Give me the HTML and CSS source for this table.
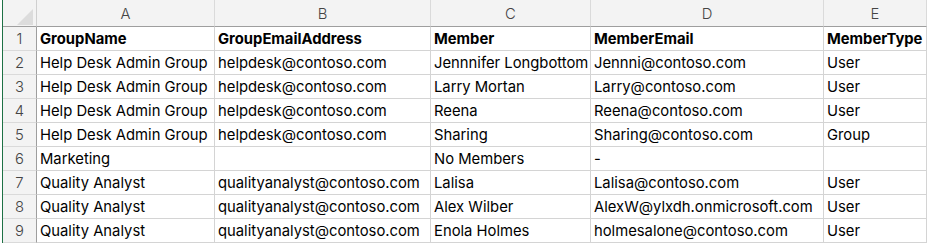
FILE: index.html
```html
<!DOCTYPE html>
<html>
<head>
<meta charset="utf-8">
<link rel="stylesheet" href="styles.css">
</head>
<body>
<div class="sheet">
  <div class="grid">
    <div class="corner"><span class="tri"></span></div>
    <div class="colhead">A</div>
    <div class="colhead">B</div>
    <div class="colhead">C</div>
    <div class="colhead">D</div>
    <div class="colhead">E</div>

    <div class="rowhead">1</div>
    <div class="cell b">GroupName</div>
    <div class="cell b">GroupEmailAddress</div>
    <div class="cell b">Member</div>
    <div class="cell b">MemberEmail</div>
    <div class="cell b">MemberType</div>

    <div class="rowhead">2</div>
    <div class="cell">Help Desk Admin Group</div>
    <div class="cell">helpdesk@contoso.com</div>
    <div class="cell">Jennnifer Longbottom</div>
    <div class="cell">Jennni@contoso.com</div>
    <div class="cell">User</div>

    <div class="rowhead">3</div>
    <div class="cell">Help Desk Admin Group</div>
    <div class="cell">helpdesk@contoso.com</div>
    <div class="cell">Larry Mortan</div>
    <div class="cell">Larry@contoso.com</div>
    <div class="cell">User</div>

    <div class="rowhead">4</div>
    <div class="cell">Help Desk Admin Group</div>
    <div class="cell">helpdesk@contoso.com</div>
    <div class="cell">Reena</div>
    <div class="cell">Reena@contoso.com</div>
    <div class="cell">User</div>

    <div class="rowhead">5</div>
    <div class="cell">Help Desk Admin Group</div>
    <div class="cell">helpdesk@contoso.com</div>
    <div class="cell">Sharing</div>
    <div class="cell">Sharing@contoso.com</div>
    <div class="cell">Group</div>

    <div class="rowhead">6</div>
    <div class="cell">Marketing</div>
    <div class="cell"></div>
    <div class="cell">No Members</div>
    <div class="cell">-</div>
    <div class="cell"></div>

    <div class="rowhead">7</div>
    <div class="cell">Quality Analyst</div>
    <div class="cell">qualityanalyst@contoso.com</div>
    <div class="cell">Lalisa</div>
    <div class="cell">Lalisa@contoso.com</div>
    <div class="cell">User</div>

    <div class="rowhead">8</div>
    <div class="cell">Quality Analyst</div>
    <div class="cell">qualityanalyst@contoso.com</div>
    <div class="cell">Alex Wilber</div>
    <div class="cell">AlexW@ylxdh.onmicrosoft.com</div>
    <div class="cell">User</div>

    <div class="rowhead">9</div>
    <div class="cell">Quality Analyst</div>
    <div class="cell">qualityanalyst@contoso.com</div>
    <div class="cell">Enola Holmes</div>
    <div class="cell">holmesalone@contoso.com</div>
    <div class="cell">User</div>
  </div>
</div>
</body>
</html>
```

FILE: styles.css
```css
html, body {
  margin: 0;
  padding: 0;
  background: #ffffff;
}
.sheet {
  padding-left: 2px;
  width: 927px;
  height: 243px;
  overflow: hidden;
  font-family: "Inter", "Liberation Sans", Arial, sans-serif;
  font-size: 14.8px;
  color: #000;
}
.grid {
  display: grid;
  grid-template-columns: 34px 178px 216px 160px 233px 103px;
  grid-template-rows: 27px repeat(9, 24px);
  border-left: 1px solid #1e7145;
  width: 924px;
}
.corner, .colhead, .rowhead, .cell {
  box-sizing: border-box;
  border-right: 1px solid #d4d4d4;
  border-bottom: 1px solid #d4d4d4;
  white-space: nowrap;
  overflow: hidden;
}
.corner {
  background: #f3f3f3;
  border-bottom: 1px solid #9e9e9e;
  border-right: 1px solid #cfcfcf;
  position: relative;
}
.tri {
  position: absolute;
  right: 3px;
  bottom: 1px;
  width: 0;
  height: 0;
  border-left: 16px solid transparent;
  border-bottom: 16px solid #dcdcdc;
}
.colhead {
  background: #f3f3f3;
  border-bottom: 1px solid #9e9e9e;
  border-right: 1px solid #dadada;
  color: #444;
  font-weight: 300;
  display: flex;
  align-items: center;
  justify-content: center;
  padding-top: 1px;
}
.rowhead {
  background: #f3f3f3;
  border-right: 1px solid #9e9e9e;
  border-bottom: 1px solid #dadada;
  color: #444;
  font-weight: 300;
  display: flex;
  align-items: center;
  justify-content: center;
}
.cell {
  display: flex;
  align-items: center;
  padding-left: 3px;
}
.b {
  font-weight: bold;
}
```
